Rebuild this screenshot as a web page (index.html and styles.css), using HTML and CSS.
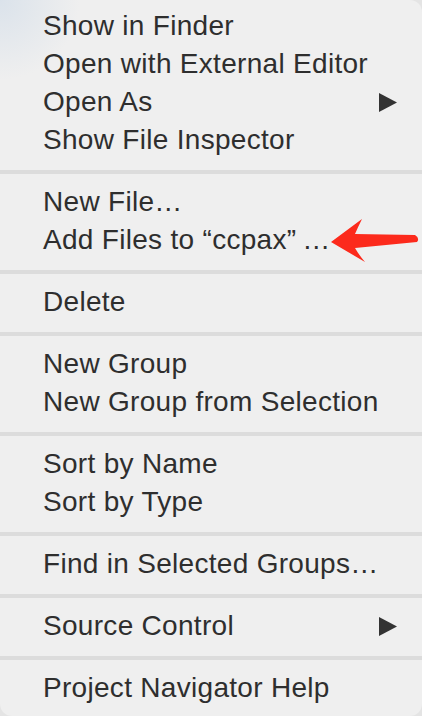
FILE: index.html
```html
<!DOCTYPE html>
<html lang="en">
<head>
  <meta charset="UTF-8" />
  <title>Project Navigator Menu</title>
  <link rel="stylesheet" href="styles.css">
</head>
<body>

  <div class="menu">
    <div class="item">Show in Finder</div>
    <div class="item">Open with External Editor</div>
    <div class="item">Open As
      <svg class="sub" width="18" height="19" viewBox="0 0 18 19"><path d="M0 0 L18 9.5 L0 19 Z" /></svg>
    </div>
    <div class="item">Show File Inspector</div>
    <div class="sep"></div>
    <div class="item">New File…</div>
    <div class="item">Add Files to “ccpax”&#8201;…</div>
    <div class="sep"></div>
    <div class="item">Delete</div>
    <div class="sep"></div>
    <div class="item">New Group</div>
    <div class="item">New Group from Selection</div>
    <div class="sep"></div>
    <div class="item">Sort by Name</div>
    <div class="item">Sort by Type</div>
    <div class="sep"></div>
    <div class="item">Find in Selected Groups…</div>
    <div class="sep"></div>
    <div class="item">Source Control
      <svg class="sub" width="18" height="19" viewBox="0 0 18 19"><path d="M0 0 L18 9.5 L0 19 Z" /></svg>
    </div>
    <div class="sep"></div>
    <div class="item">Project Navigator Help</div>

    <!-- red pointer drawn over the menu -->
    <svg class="pointer" width="422" height="716" viewBox="0 0 422 716">
      <path d="M331 242 L362 219 Q358 227 355 234 L415 235 Q420 238 417 242 L355 248 Q359 255 365 262 Z" />
    </svg>
  </div>

</body>
</html>
```

FILE: styles.css
```css
body {
  margin: 0;
  background-color: #e4e4e4;
  font-family: 'Liberation Sans', Arial, sans-serif;
}

.menu {
  position: relative;
  width: 422px;
  height: 716px;
  box-sizing: border-box;
  padding-top: 7px;
  background-color: #efefef;
  background-image: radial-gradient(circle at 0 0, rgba(205, 218, 232, 0.6) 0, rgba(239, 239, 239, 0) 80px);
  border-radius: 0 12px 12px 12px;
  overflow: hidden;
}

.item {
  display: flex;
  align-items: center;
  height: 38px;
  line-height: 38px;
  padding: 0 25px 0 43px;
  font-size: 28px;
  letter-spacing: 0.3px;
  color: #2e2e2e;
  white-space: nowrap;
}

.sub {
  margin-left: auto;
  fill: #333;
}

.sep {
  height: 4px;
  margin: 11px 0 9px;
  background-color: #dcdcdc;
}

.pointer {
  position: absolute;
  left: 0;
  top: 0;
  fill: #fc2a1c;
}
```
